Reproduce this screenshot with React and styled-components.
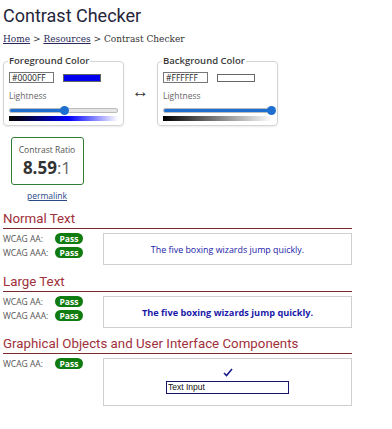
import React from 'react';
import styled, { createGlobalStyle } from 'styled-components';

const Global = createGlobalStyle`
  body {
    margin: 0;
    background: #fff;
    font-family: "Open Sans", "Liberation Sans", sans-serif;
  }
`;

const Page = styled.div`
  width: 349px;
  padding: 3px 3px 20px 3px;
`;

const Title = styled.h1`
  margin: 0;
  font-family: Roboto, sans-serif;
  font-weight: 400;
  font-size: 18px;
  line-height: 26px;
  color: #26263a;
`;

const Crumbs = styled.div`
  margin-top: 3px;
  font-family: "DejaVu Serif", serif;
  font-size: 9px;
  line-height: 14px;
  color: #333;
  a {
    color: #2a2a5a;
    text-decoration: underline;
  }
`;

const Pickers = styled.div`
  display: flex;
  align-items: center;
  margin-top: 9px;
`;

const Picker = styled.fieldset`
  width: 121px;
  height: 71px;
  box-sizing: border-box;
  margin: 0;
  padding: 5px 5px 0 5px;
  border: 1px solid #d4d4d4;
  border-radius: 4px;
  box-shadow: 0 1px 2px rgba(0, 0, 0, 0.08);
`;

const Legend = styled.legend`
  padding: 0 1px;
  margin-left: -1px;
  font-size: 9.5px;
  font-weight: 600;
  color: #3a3a3a;
  line-height: 12px;
`;

const InputRow = styled.div`
  display: flex;
  align-items: center;
  gap: 9px;
`;

const Hex = styled.div`
  width: 45px;
  height: 11px;
  box-sizing: border-box;
  border: 1px solid #777;
  font-size: 8.5px;
  line-height: 9px;
  padding-left: 2px;
  color: #222;
`;

const Swatch = styled.div`
  width: 38px;
  height: 8px;
  box-sizing: border-box;
  border: 1px solid #666;
  background: ${p => p.color};
`;

const Label = styled.div`
  margin-top: 7px;
  font-size: 8.5px;
  line-height: 12px;
  color: #666;
`;

const Track = styled.div`
  position: relative;
  margin-top: 6px;
  height: 3px;
  border-radius: 2px;
  background: #e6e6e6;
  border: 1px solid #bbb;
  box-sizing: content-box;
`;

const Fill = styled.div`
  height: 100%;
  background: #1e6fd0;
  border-radius: 2px;
`;

const Thumb = styled.div`
  position: absolute;
  top: -3px;
  width: 9px;
  height: 9px;
  margin-left: -4px;
  border-radius: 50%;
  background: #1e6fd0;
`;

const Gradient = styled.div`
  margin-top: 3px;
  height: 5px;
  background: ${p => p.bg};
`;

const Swap = styled.div`
  width: 33px;
  text-align: center;
  font-size: 17px;
  color: #333;
  line-height: 16px;
`;

const RatioWrap = styled.div`
  width: 80px;
  display: flex;
  flex-direction: column;
  align-items: center;
  margin-top: 11px;
  margin-left: 4px;
`;

const RatioBox = styled.div`
  width: 73px;
  height: 48px;
  box-sizing: border-box;
  border: 1px solid #2f7d32;
  border-radius: 3px;
  text-align: center;
  padding-top: 6px;
`;

const RatioLabel = styled.div`
  font-size: 8.5px;
  line-height: 12px;
  color: #555;
`;

const RatioValue = styled.div`
  margin-top: 1px;
  font-size: 17px;
  line-height: 22px;
  color: #333;
  b {
    font-weight: 700;
  }
  span {
    color: #666;
  }
`;

const Permalink = styled.a`
  margin-top: 5px;
  font-size: 8.5px;
  line-height: 12px;
  color: #2a4a8a;
  text-decoration: underline;
`;

const Heading = styled.h2`
  margin: ${p => (p.tight ? 7 : 8)}px 0 0 0;
  font-family: Roboto, sans-serif;
  font-weight: 400;
  font-size: 13.3px;
  line-height: 17px;
  color: #a0303a;
  border-bottom: 1px solid #7a2b2e;
  padding-bottom: 1px;
`;

const Result = styled.div`
  display: flex;
  align-items: flex-start;
  margin-top: 4px;
`;

const Levels = styled.div`
  width: 100px;
  display: flex;
  flex-direction: column;
  gap: 3px;
`;

const Level = styled.div`
  display: flex;
  align-items: center;
  font-size: 8.5px;
  line-height: 11px;
  color: #555;
  span {
    width: 52px;
  }
`;

const Pass = styled.div`
  width: 28px;
  height: 11px;
  border-radius: 6px;
  background: #107c10;
  color: #fff;
  font-size: 8.5px;
  font-weight: 700;
  line-height: 11px;
  text-align: center;
`;

const Sample = styled.div`
  width: 249px;
  height: ${p => p.h || 32}px;
  box-sizing: border-box;
  border: 1px solid #cfcfcf;
  display: flex;
  flex-direction: column;
  align-items: center;
  justify-content: center;
  color: #1a1aa8;
  font-size: ${p => (p.large ? '9.2px' : '8.9px')};
  font-weight: ${p => (p.large ? 700 : 400)};
`;

const Check = styled.svg`
  width: 10px;
  height: 9px;
  margin-top: -2px;
`;

const TextInput = styled.div`
  margin-top: 4px;
  width: 123px;
  height: 13px;
  box-sizing: border-box;
  border: 1px solid #15156b;
  font-family: "Liberation Sans", sans-serif;
  font-size: 8.5px;
  line-height: 11px;
  padding-left: 1px;
  color: #111;
`;

function ColorPicker({ legend, hex, color, pct, bg }) {
  return (
    <Picker>
      <Legend>{legend}</Legend>
      <InputRow>
        <Hex>{hex}</Hex>
        <Swatch color={color} />
      </InputRow>
      <Label>Lightness</Label>
      <Track>
        <Fill style={{ width: pct + '%' }} />
        <Thumb style={{ left: pct + '%' }} />
      </Track>
      <Gradient bg={bg} />
    </Picker>
  );
}

function Levels2({ aaa }) {
  return (
    <Levels>
      <Level><span>WCAG AA:</span><Pass>Pass</Pass></Level>
      {aaa && <Level><span>WCAG AAA:</span><Pass>Pass</Pass></Level>}
    </Levels>
  );
}

export default function App() {
  return (
    <Page>
      <Global />
      <Title>Contrast Checker</Title>
      <Crumbs>
        <a>Home</a> &gt; <a>Resources</a> &gt; Contrast Checker
      </Crumbs>
      <Pickers>
        <ColorPicker
          legend="Foreground Color"
          hex="#0000FF"
          color="#0000ee"
          pct={50}
          bg="linear-gradient(to right, #000 0%, #000050 20%, #0000ff 55%, #fff 100%)"
        />
        <Swap>&#8596;</Swap>
        <ColorPicker
          legend="Background Color"
          hex="#FFFFFF"
          color="#ffffff"
          pct={100}
          bg="linear-gradient(to right, #000, #fff)"
        />
      </Pickers>
      <RatioWrap>
        <RatioBox>
          <RatioLabel>Contrast Ratio</RatioLabel>
          <RatioValue><b>8.59</b><span>:1</span></RatioValue>
        </RatioBox>
        <Permalink>permalink</Permalink>
      </RatioWrap>

      <Heading>Normal Text</Heading>
      <Result>
        <Levels2 aaa />
        <Sample>The five boxing wizards jump quickly.</Sample>
      </Result>

      <Heading>Large Text</Heading>
      <Result>
        <Levels2 aaa />
        <Sample large>The five boxing wizards jump quickly.</Sample>
      </Result>

      <Heading tight>Graphical Objects and User Interface Components</Heading>
      <Result>
        <Levels2 />
        <Sample h={48}>
          <Check viewBox="0 0 10 9">
            <path d="M1 5 L3.5 7.5 L9 1" fill="none" stroke="#1a1a8a" strokeWidth="1.6" />
          </Check>
          <TextInput>Text Input</TextInput>
        </Sample>
      </Result>
    </Page>
  );
}
